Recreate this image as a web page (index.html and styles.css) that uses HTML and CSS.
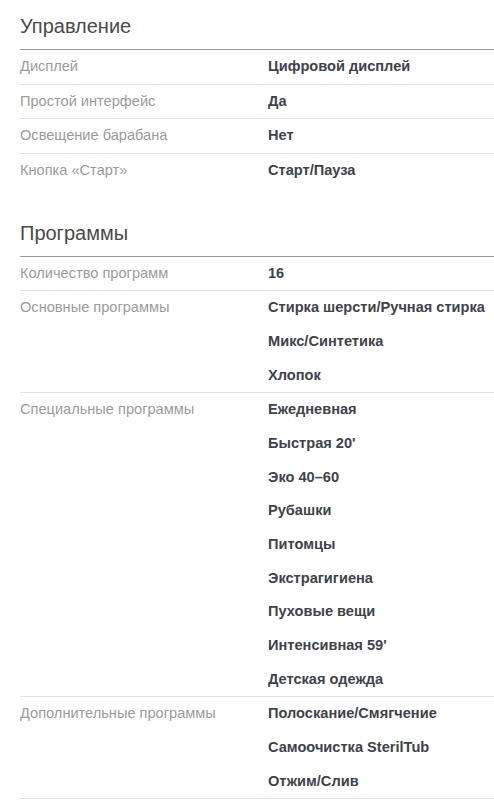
FILE: index.html
```html
<!DOCTYPE html>
<html lang="ru">
<head>
<meta charset="utf-8">
<link rel="stylesheet" href="styles.css">
</head>
<body>
<div class="specs">
  <section class="group">
    <h2 class="group-title">Управление</h2>
    <div class="row"><div class="label">Дисплей</div><div class="values"><div class="val">Цифровой дисплей</div></div></div>
    <div class="row"><div class="label">Простой интерфейс</div><div class="values"><div class="val">Да</div></div></div>
    <div class="row"><div class="label">Освещение барабана</div><div class="values"><div class="val">Нет</div></div></div>
    <div class="row row-last"><div class="label">Кнопка «Старт»</div><div class="values"><div class="val">Старт/Пауза</div></div></div>
  </section>
  <section class="group">
    <h2 class="group-title">Программы</h2>
    <div class="row"><div class="label">Количество программ</div><div class="values"><div class="val">16</div></div></div>
    <div class="row"><div class="label">Основные программы</div><div class="values"><div class="val">Стирка шерсти/Ручная стирка</div><div class="val">Микс/Синтетика</div><div class="val">Хлопок</div></div></div>
    <div class="row"><div class="label">Специальные программы</div><div class="values"><div class="val">Ежедневная</div><div class="val">Быстрая 20'</div><div class="val">Эко 40–60</div><div class="val">Рубашки</div><div class="val">Питомцы</div><div class="val">Экстрагигиена</div><div class="val">Пуховые вещи</div><div class="val">Интенсивная 59'</div><div class="val">Детская одежда</div></div></div>
    <div class="row"><div class="label">Дополнительные программы</div><div class="values"><div class="val">Полоскание/Смягчение</div><div class="val">Самоочистка SterilTub</div><div class="val">Отжим/Слив</div></div></div>
  </section>
</div>
</body>
</html>
```
FILE: styles.css
```css
html, body {
  margin: 0;
  padding: 0;
  background: #fff;
}
body {
  font-family: "Liberation Sans", Arial, sans-serif;
  overflow: hidden;
}
.specs {
  padding: 0 0 0 20px;
}
.group {
  margin-bottom: 19px;
}
.group-title {
  margin: 0;
  padding: 14px 0 11px;
  font-size: 20px;
  font-weight: normal;
  color: #4a4a4a;
  line-height: 24px;
  border-bottom: 1px solid #9a9a9a;
}
.row {
  display: grid;
  grid-template-columns: 248px 1fr;
  border-bottom: 1px solid #e1e4e6;
}
.row-last {
  border-bottom: none;
}
.label {
  font-size: 14.6px;
  color: #9b9b9b;
  line-height: 33.67px;
}
.values {
  display: flex;
  flex-direction: column;
}
.val {
  font-size: 14.6px;
  font-weight: bold;
  color: #3e434a;
  line-height: 33.67px;
  white-space: nowrap;
}
```
